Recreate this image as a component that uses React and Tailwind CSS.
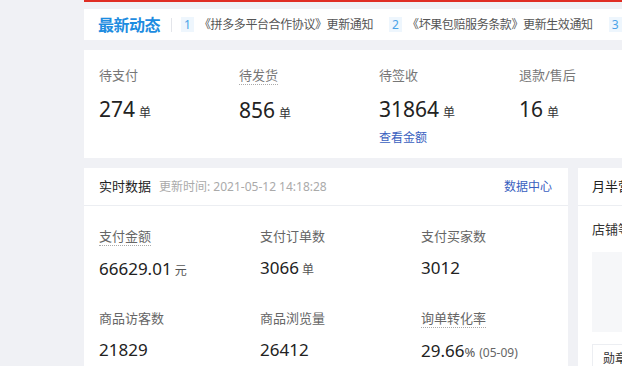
const font = { fontFamily: '"Noto Sans", "Noto Sans CJK SC", sans-serif' }

const news = [
  { no: 1, text: '《拼多多平台合作协议》更新通知' },
  { no: 2, text: '《坏果包赔服务条款》更新生效通知' },
  { no: 3, text: '《商家服务规则》更新通知' },
]

const orders = [
  { label: '待支付', value: '274' },
  { label: '待发货', value: '856', dotted: true },
  { label: '待签收', value: '31864', link: '查看金额' },
  { label: '退款/售后', value: '16' },
]

const stats = [
  { label: '支付金额', value: '66629.01', unit: '元', dotted: true },
  { label: '支付订单数', value: '3066', unit: '单' },
  { label: '支付买家数', value: '3012' },
  { label: '商品访客数', value: '21829' },
  { label: '商品浏览量', value: '26412' },
  { label: '询单转化率', value: '29.66', pct: true, extra: '(05-09)', dotted: true },
]

export default function App() {
  return (
    <div
      className="w-[622px] h-[366px] overflow-hidden bg-[#f0f1f5] flex"
      style={font}
    >
      <div className="w-[84px] shrink-0" />
      <div className="w-[700px] shrink-0 flex flex-col">
        <div className="h-[2px] shrink-0 bg-[#e02e24]" />

        {/* news */}
        <div className="mt-[7px] h-[31px] shrink-0 bg-white flex items-center pl-[14px] whitespace-nowrap">
          <span className="text-[16px] font-bold text-[#1d8ce0] tracking-[-0.5px]">最新动态</span>
          <span className="ml-[11px] w-px h-[14px] bg-[#e3e5ea]" />
          <div className="flex items-center ml-[9px]">
            {news.map((n) => (
              <div key={n.no} className="flex items-center mr-[16px]">
                <span className="w-[13px] h-[15px] bg-[#eef6fd] text-[#4aa3e8] text-[12px] flex items-center justify-center leading-none">
                  {n.no}
                </span>
                <span className="ml-[5px] text-[12px] text-[#555] tracking-[-0.4px]">{n.text}</span>
              </div>
            ))}
          </div>
        </div>

        {/* orders */}
        <div className="mt-[10px] h-[108px] shrink-0 bg-white flex pl-[15px] pt-[16px]">
          {orders.map((o) => (
            <div key={o.label} className="w-[140px] shrink-0 flex flex-col items-start">
              <span
                className={
                  'text-[13px] text-[#777] leading-[18px] ' +
                  (o.dotted ? 'border-b border-dotted border-[#aaa]' : '')
                }
              >
                {o.label}
              </span>
              <div className="mt-[15px] flex items-baseline leading-none">
                <span className="text-[21px] text-[#222]">{o.value}</span>
                <span className="ml-[4px] text-[12px] text-[#333]">单</span>
              </div>
              {o.link && (
                <span className="mt-[12px] text-[12px] text-[#3a5fc0] leading-none">{o.link}</span>
              )}
            </div>
          ))}
        </div>

        <div className="mt-[10px] flex gap-[10px] flex-1 shrink-0">
          {/* realtime */}
          <div className="w-[484px] shrink-0 bg-white">
            <div className="h-[38px] border-b border-[#eceef2] flex items-center px-[15px] whitespace-nowrap">
              <span className="text-[13px] text-[#222]">实时数据</span>
              <span className="ml-[8px] text-[12px] text-[#aaa]">更新时间: 2021-05-12 14:18:28</span>
              <span className="ml-auto pr-[1px] text-[12px] text-[#3a5fc0]">数据中心</span>
            </div>
            <div className="grid grid-cols-[161px_161px_161px] pl-[15px] pt-[21px] gap-y-[32px]">
              {stats.map((s) => (
                <div key={s.label} className="flex flex-col items-start">
                  <span
                    className={
                      'text-[13px] text-[#666] leading-[18px] ' +
                      (s.dotted ? 'border-b border-dotted border-[#aaa]' : '')
                    }
                  >
                    {s.label}
                  </span>
                  <div className="mt-[14px] flex items-baseline leading-none whitespace-nowrap">
                    <span className="text-[17px] text-[#222]">{s.value}</span>
                    {s.pct && <span className="text-[13px] text-[#555]">%</span>}
                    {s.unit && <span className="ml-[3px] text-[12px] text-[#555]">{s.unit}</span>}
                    {s.extra && <span className="ml-[4px] text-[12px] text-[#666]">{s.extra}</span>}
                  </div>
                </div>
              ))}
            </div>
          </div>

          {/* side card */}
          <div className="w-[200px] shrink-0 bg-white">
            <div className="h-[38px] border-b border-[#eceef2] flex items-center px-[14px]">
              <span className="text-[13px] text-[#222]">月半营销活动</span>
            </div>
            <div className="px-[14px] pt-[15px]">
              <div className="text-[13px] text-[#333] leading-[16px]">店铺等级</div>
              <div className="mt-[15px] h-[80px] bg-[#f6f7f9]" />
              <div className="mt-[12px] h-[30px] border border-[#eceef2] flex items-center pl-[10px] text-[12px] text-[#333]">
                勋章
              </div>
            </div>
          </div>
        </div>
      </div>
    </div>
  )
}
